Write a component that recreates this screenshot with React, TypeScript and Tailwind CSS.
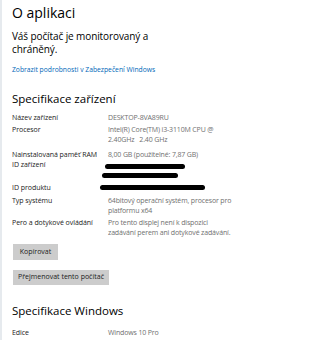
import React from 'react';

const Redacted: React.FC<{ className: string }> = ({ className }) => (
  <div className={`h-[5px] rounded-full bg-black ${className}`} />
);

const Label: React.FC<{ children: React.ReactNode }> = ({ children }) => (
  <div className="w-[96px] shrink-0 tracking-[-0.05px] text-[#222]">{children}</div>
);

const Value: React.FC<{ children: React.ReactNode }> = ({ children }) => (
  <div className="tracking-[-0.15px] text-[#707070]">{children}</div>
);

const App: React.FC = () => {
  return (
    <div
      className="w-[330px] h-[340px] overflow-hidden bg-white border-l-2 border-[#e6eaee] pl-[10px] text-[#1a1a1a]"
      style={{ fontFamily: '"Open Sans", "Noto Sans", sans-serif' }}
    >
      <h1 className="pt-[3px] text-[14px] leading-[20px] text-black">O aplikaci</h1>

      <p className="mt-[7px] text-[10px] leading-[13px] tracking-[-0.1px] text-black">
        Váš počítač je monitorovaný a
        <br />
        chráněný.
      </p>

      <a className="block mt-[9px] text-[6.75px] leading-[10px] text-[#0067b8]">
        Zobrazit podrobnosti v Zabezpečení Windows
      </a>

      <h2 className="mt-[16px] text-[11.5px] leading-[16px] text-black">Specifikace zařízení</h2>

      <div className="mt-[6px] text-[7px] leading-[10px]">
        <div className="flex">
          <Label>Název zařízení</Label>
          <Value>DESKTOP-8VA89RU</Value>
        </div>

        <div className="flex mt-[2px]">
          <Label>Procesor</Label>
          <Value>
            Intel(R) Core(TM) i3-3110M CPU @
            <br />
            2.40GHz&nbsp;&nbsp;&nbsp;2.40 GHz
          </Value>
        </div>

        <div className="flex mt-[5px]">
          <Label>Nainstalovaná paměť RAM</Label>
          <Value>8,00 GB (použitelné: 7,87 GB)</Value>
        </div>

        <div className="flex h-[23px]">
          <Label>ID zařízení</Label>
          <div className="flex flex-col gap-[4px] pt-[4px]">
            <Redacted className="w-[80px] -ml-[3px]" />
            <Redacted className="w-[76px] -ml-[6px]" />
          </div>
        </div>

        <div className="flex h-[12px]">
          <Label>ID produktu</Label>
          <div className="pt-[2px]">
            <Redacted className="w-[105px] -ml-[8px]" />
          </div>
        </div>

        <div className="flex mt-[1px]">
          <Label>Typ systému</Label>
          <Value>
            64bitový operační systém, procesor pro
            <br />
            platformu x64
          </Value>
        </div>

        <div className="flex mt-[2px]">
          <Label>Pero a dotykové ovládání</Label>
          <Value>
            Pro tento displej není k dispozici
            <br />
            zadávání perem ani dotykové zadávání.
          </Value>
        </div>
      </div>

      <button className="block mt-[6px] ml-[1px] h-[16px] w-[45px] bg-[#cccccc] text-[7px] text-[#1a1a1a]">
        Kopírovat
      </button>

      <button className="block mt-[10px] ml-[1px] h-[15px] w-[96px] bg-[#cccccc] text-[7px] text-[#1a1a1a]">
        Přejmenovat tento počítač
      </button>

      <h2 className="mt-[18px] text-[11.5px] leading-[16px] text-black">Specifikace Windows</h2>

      <div className="mt-[9px] flex text-[7px] leading-[10px]">
        <Label>Edice</Label>
        <Value>Windows 10 Pro</Value>
      </div>
    </div>
  );
};

export default App;
